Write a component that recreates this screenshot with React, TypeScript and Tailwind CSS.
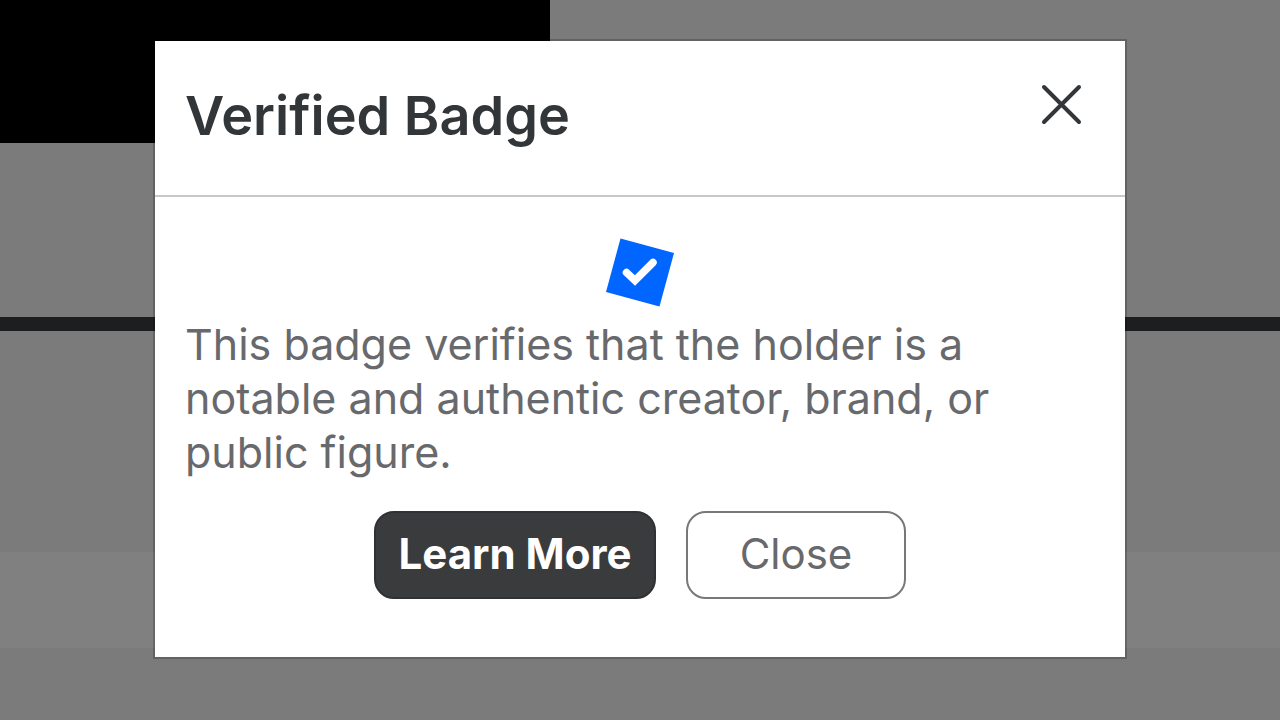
export default function App() {
  return (
    <div className="relative flex min-h-screen flex-col bg-[#7b7b7b] font-['Inter',sans-serif]">
      <div className="h-[143px] w-[43%] bg-black" />
      <div className="mt-[174px] h-[14px] bg-[#1d1e20]" />
      <div className="mt-[221px] h-24 bg-[#808080]" />

      <div className="absolute inset-0 flex items-start justify-center px-4 pt-[41px]">
        <section
          role="dialog"
          aria-modal="true"
          aria-labelledby="badge-title"
          aria-describedby="badge-text"
          className="w-full max-w-[970px] bg-white shadow-[0_0_0_2px_rgba(0,0,0,0.2)]"
        >
          <header className="flex items-start justify-between border-b-2 border-[#c8c8c8] px-[30px] pt-8 pb-12">
            <h1 id="badge-title" className="pt-3 text-[54px] leading-[62px] font-semibold text-[#333639]">
              Verified Badge
            </h1>
            <button type="button" aria-label="Close dialog" className="p-2 text-[#333639]">
              <svg className="size-12" viewBox="0 0 48 48" fill="none" stroke="currentColor" strokeWidth="4" strokeLinecap="round">
                <path d="M5 6l35 35M40 6L5 41" />
              </svg>
            </button>
          </header>

          <div className="flex flex-col px-[30px] pt-10 pb-[58px]">
            <svg className="size-[72px] self-center" viewBox="0 0 72 72" aria-hidden="true">
              <path d="M16.5 1.5L70 16L55.5 69.5L2 55Z" fill="#0066ff" />
              <path d="M22.5 35.5L31 43.5L49 25.5" fill="none" stroke="#fff" strokeWidth="7.5" strokeLinecap="round" />
            </svg>
            <p id="badge-text" className="mt-2 pr-8 text-[43px] leading-[54px] text-[#68696d]">
              This badge verifies that the holder is a notable and authentic creator, brand, or public figure.
            </p>
            <div className="mt-8 flex flex-wrap justify-center gap-[30px]">
              <button type="button" className="h-[88px] w-[282px] rounded-[20px] border-2 border-[#303135] bg-[#3a3b3d] pb-1 text-[42px] font-bold text-white">
                Learn More
              </button>
              <button type="button" className="h-[88px] w-[220px] rounded-[20px] border-2 border-[#77787a] bg-white pb-1 text-[42px] text-[#68696d]">
                Close
              </button>
            </div>
          </div>
        </section>
      </div>
    </div>
  );
}
